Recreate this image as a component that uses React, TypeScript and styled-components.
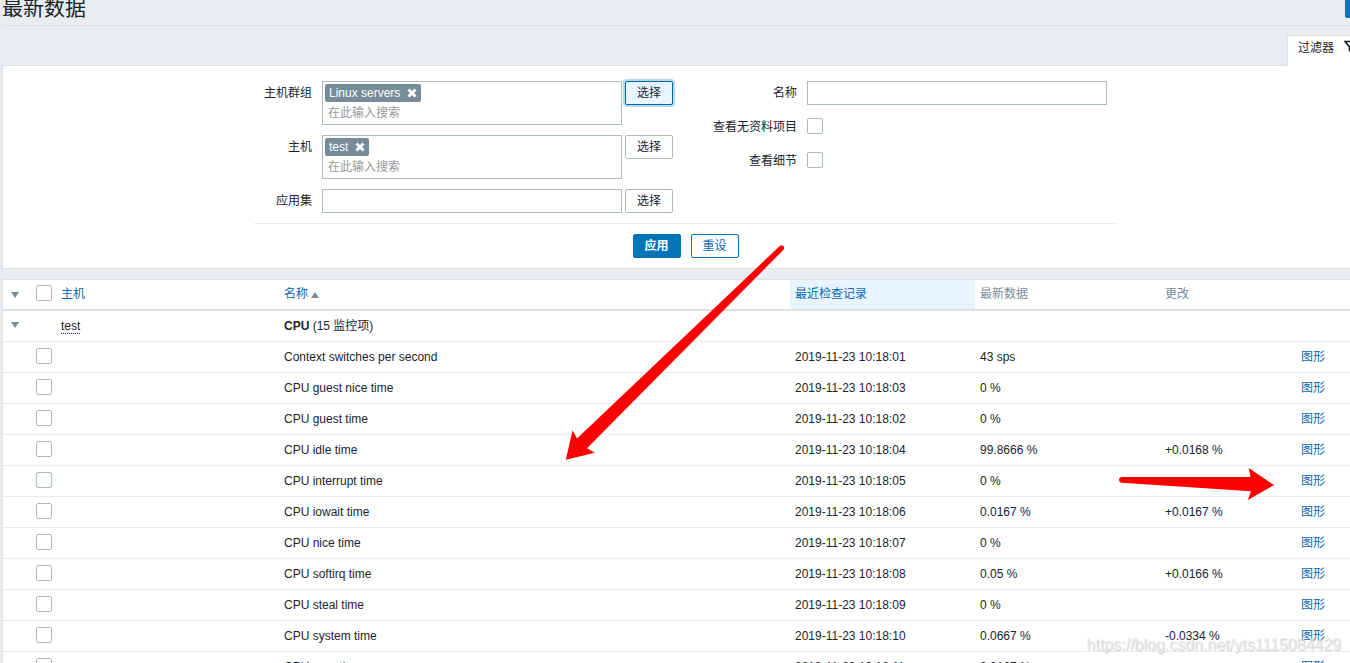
import React from "react";
import styled, { createGlobalStyle, css } from "styled-components";

const color = {
  page: "#e9edf0",
  line: "#dce2e5",
  rowLine: "#e9ebed",
  text: "#1a252c",
  muted: "#768d99",
  control: "#acbbc2",
  link: "#0275b8",
  linkText: "#0a69b0",
  hover: "#e8f5ff",
  arrow: "#fe0000",
};

const GlobalStyle = createGlobalStyle`
  * { box-sizing: border-box; }
  html, body { margin: 0; height: 100%; overflow: hidden; }
  body, button, input {
    font-family: "Liberation Sans", Arial, "Noto Sans CJK SC", sans-serif;
    font-size: 12px;
    line-height: 16px;
    color: ${color.text};
  }
  body { background: ${color.page}; }
`;

const Viewport = styled.div`
  position: relative;
  height: 100vh;
  overflow: hidden;
`;

const Page = styled.main`
  margin-left: 2px;
  margin-right: -19px;
`;

const Header = styled.header`
  display: flex;
  justify-content: space-between;
  height: 26px;
  padding-bottom: 7px;
  border-bottom: 1px solid ${color.line};
`;

const Title = styled.h1`
  margin: 0;
  font-size: 21px;
  line-height: 16px;
  font-weight: 400;
`;

const KioskButton = styled.button`
  align-self: flex-end;
  flex: none;
  width: 24px;
  height: 24px;
  padding: 0;
  border: 0;
  border-radius: 2px;
  background: ${color.link};
`;

const TabBar = styled.div`
  display: flex;
  justify-content: flex-end;
  padding-top: 9px;
`;

const Tab = styled.button`
  position: relative;
  display: flex;
  align-items: flex-start;
  gap: 10px;
  height: 31px;
  margin-bottom: -1px;
  padding: 4px 10px;
  border: 1px solid ${color.line};
  border-bottom: 0;
  background: #fff;
`;

const FilterPanel = styled.form`
  display: flex;
  flex-direction: column;
  align-items: center;
  padding: 15px 0 10px;
  margin-bottom: 10px;
  border: 1px solid ${color.line};
  background: #fff;
`;

const FilterColumns = styled.div`
  display: flex;
  gap: 40px;
  padding: 0 10px 10px;
  border-bottom: 1px solid ${color.rowLine};
`;

const Fields = styled.div`
  display: grid;
  grid-template-columns: max-content auto;
  align-content: start;
  gap: 10px;
`;

const Label = styled.label`
  line-height: 24px;
  text-align: right;
`;

const Control = styled.div`
  display: flex;
  align-items: flex-start;
  gap: 3px;
  min-height: 24px;
`;

const TextInput = styled.input`
  width: 300px;
  height: 24px;
  padding: 0 5px;
  border: 1px solid ${color.control};
  outline: 0;
`;

const MultiSelect = styled.div`
  display: flex;
  flex-direction: column;
  align-items: flex-start;
  gap: 2px;
  width: 300px;
  padding: 2px;
  border: 1px solid ${color.control};
  background: #fff;

  input {
    width: 100%;
    height: 18px;
    padding: 0 3px;
    border: 0;
    outline: 0;
  }
  input::placeholder { color: #999; opacity: 1; }
`;

const Tag = styled.span`
  display: flex;
  align-items: center;
  gap: 7px;
  height: 18px;
  padding: 0 4px;
  border-radius: 2px;
  background: ${color.muted};
  color: #fff;

  button {
    display: flex;
    padding: 0;
    border: 0;
    background: none;
  }
`;

const Button = styled.button<{ $kind?: "focused" | "primary" | "outline" }>`
  width: 48px;
  height: 24px;
  padding: 0;
  border: 1px solid ${color.control};
  border-radius: 2px;
  background: #fff;
  ${(p) =>
    p.$kind === "focused" &&
    css`
      border-color: #0268a5;
      background: ${color.hover};
      box-shadow: 0 0 0 2px #b3d9f7;
    `}
  ${(p) =>
    p.$kind === "primary" &&
    css`
      border-color: ${color.link};
      background: ${color.link};
      color: #fff;
      font-weight: 700;
    `}
  ${(p) =>
    p.$kind === "outline" &&
    css`
      border-color: ${color.link};
      color: ${color.linkText};
    `}
`;

const Actions = styled.div`
  display: flex;
  gap: 10px;
  padding-top: 10px;
`;

const Checkbox = styled.input.attrs({ type: "checkbox" })`
  appearance: none;
  display: block;
  width: 16px;
  height: 16px;
  margin: 0;
  border: 1px solid ${color.control};
  border-radius: 2px;
  background: #fff;

  ${Control} & { margin-top: 3px; }
`;

const Table = styled.table`
  width: 100%;
  table-layout: fixed;
  border-collapse: separate;
  border-spacing: 0;
  border: 1px solid ${color.line};
  background: #fff;
`;

const Col = styled.col<{ $w?: number }>`
  ${(p) => p.$w && `width: ${p.$w}px;`}
`;

const Th = styled.th<{ $active?: boolean }>`
  height: 31px;
  padding: 5px 5px 6px;
  border-bottom: 2px solid ${color.line};
  background: ${(p) => (p.$active ? color.hover : "#fff")};
  color: ${color.muted};
  font-weight: 400;
  text-align: left;
  vertical-align: top;
  line-height: 18px;
  white-space: nowrap;
`;

const Td = styled.td`
  height: 31px;
  padding: 6px 5px;
  border-bottom: 1px solid ${color.rowLine};
  vertical-align: top;
  line-height: 18px;
  white-space: nowrap;
`;

const Link = styled.a`
  color: ${color.linkText};
  text-decoration: none;
`;

const HostLink = styled.a`
  display: inline-block;
  line-height: 14px;
  color: ${color.text};
  text-decoration: none;
  border-bottom: 1px dotted ${color.text};
`;

const Toggle = styled.button<{ $head?: boolean }>`
  display: block;
  margin: 0 0 0 3px;
  padding: ${(p) => (p.$head ? "7px 0 0" : "5px 0 0")};
  border: 0;
  background: none;

  svg { display: block; }
`;

const ArrowLayer = styled.svg`
  position: absolute;
  left: 0;
  top: 0;
  pointer-events: none;
`;

const Watermark = styled.div`
  position: absolute;
  right: 9px;
  bottom: 8px;
  font-size: 16px;
  line-height: 20px;
  color: rgba(236, 236, 236, 0.75);
  text-shadow: 1px 1px 1px rgba(150, 150, 150, 0.45);
  pointer-events: none;
`;

const Triangle = ({ up }: { up?: boolean }) => (
  <svg width="8" height="6" viewBox="0 0 8 6" aria-hidden="true">
    <path d={up ? "M0 6L4 0L8 6Z" : "M0 0H8L4 6Z"} fill={color.muted} />
  </svg>
);

const Funnel = () => (
  <svg width="14" height="14" viewBox="0 0 14 14" aria-hidden="true">
    <path d="M1 1.5H13L8.5 7V12.5L5.5 10.5V7Z" fill="none" stroke={color.text} strokeWidth="1.6" />
  </svg>
);

const Cross = () => (
  <svg width="10" height="10" viewBox="0 0 10 10" aria-hidden="true">
    <path d="M1.5 1.5L8.5 8.5M8.5 1.5L1.5 8.5" stroke="#fff" strokeWidth="2.8" />
  </svg>
);

type Picker = { id: string; label: string; tag?: string; focused?: boolean };

const pickers: Picker[] = [
  { id: "groups", label: "主机群组", tag: "Linux servers", focused: true },
  { id: "hosts", label: "主机", tag: "test" },
  { id: "application", label: "应用集" },
];

const items: [string, string, string, string][] = [
  ["Context switches per second", "01", "43 sps", ""],
  ["CPU guest nice time", "03", "0 %", ""],
  ["CPU guest time", "02", "0 %", ""],
  ["CPU idle time", "04", "99.8666 %", "+0.0168 %"],
  ["CPU interrupt time", "05", "0 %", ""],
  ["CPU iowait time", "06", "0.0167 %", "+0.0167 %"],
  ["CPU nice time", "07", "0 %", ""],
  ["CPU softirq time", "08", "0.05 %", "+0.0166 %"],
  ["CPU steal time", "09", "0 %", ""],
  ["CPU system time", "10", "0.0667 %", "-0.0334 %"],
  ["CPU user time", "11", "0.0167 %", ""],
];

const PickerField = ({ id, label, tag, focused }: Picker) => (
  <>
    <Label htmlFor={id}>{label}</Label>
    <Control>
      {tag ? (
        <MultiSelect>
          <Tag>
            {tag}
            <button type="button" aria-label={`移除 ${tag}`}>
              <Cross />
            </button>
          </Tag>
          <input id={id} placeholder="在此输入搜索" />
        </MultiSelect>
      ) : (
        <TextInput id={id} />
      )}
      <Button type="button" $kind={focused ? "focused" : undefined}>
        选择
      </Button>
    </Control>
  </>
);

const Filter = () => (
  <FilterPanel onSubmit={(e) => e.preventDefault()}>
    <FilterColumns>
      <Fields>
        {pickers.map((p) => (
          <PickerField key={p.id} {...p} />
        ))}
      </Fields>
      <Fields>
        <Label htmlFor="name">名称</Label>
        <Control>
          <TextInput id="name" />
        </Control>
        <Label htmlFor="without-data">查看无资料项目</Label>
        <Control>
          <Checkbox id="without-data" />
        </Control>
        <Label htmlFor="details">查看细节</Label>
        <Control>
          <Checkbox id="details" />
        </Control>
      </Fields>
    </FilterColumns>
    <Actions>
      <Button type="submit" $kind="primary">
        应用
      </Button>
      <Button type="reset" $kind="outline">
        重设
      </Button>
    </Actions>
  </FilterPanel>
);

const LatestData = () => (
  <Table>
    <colgroup>
      <Col $w={28} />
      <Col $w={25} />
      <Col $w={223} />
      <Col />
      <Col $w={185} />
      <Col $w={185} />
      <Col $w={136} />
      <Col $w={72} />
    </colgroup>
    <thead>
      <tr>
        <Th>
          <Toggle $head type="button" aria-label="全部折叠">
            <Triangle />
          </Toggle>
        </Th>
        <Th>
          <Checkbox aria-label="全选" />
        </Th>
        <Th>
          <Link href="#host">主机</Link>
        </Th>
        <Th>
          <Link href="#name">
            名称 <Triangle up />
          </Link>
        </Th>
        <Th $active>
          <Link href="#lastclock">最近检查记录</Link>
        </Th>
        <Th>最新数据</Th>
        <Th>更改</Th>
        <Th />
      </tr>
    </thead>
    <tbody>
      <tr>
        <Td>
          <Toggle type="button" aria-label="折叠 test">
            <Triangle />
          </Toggle>
        </Td>
        <Td />
        <Td>
          <HostLink href="#test">test</HostLink>
        </Td>
        <Td colSpan={5}>
          <b>CPU</b> (15 监控项)
        </Td>
      </tr>
      {items.map(([name, second, value, change]) => (
        <tr key={name}>
          <Td />
          <Td>
            <Checkbox aria-label={name} />
          </Td>
          <Td />
          <Td>{name}</Td>
          <Td>2019-11-23 10:18:{second}</Td>
          <Td>{value}</Td>
          <Td>{change}</Td>
          <Td>
            <Link href="#graph">图形</Link>
          </Td>
        </tr>
      ))}
    </tbody>
  </Table>
);

export default function App() {
  return (
    <>
      <GlobalStyle />
      <Viewport>
        <Page>
          <Header>
            <Title>最新数据</Title>
            <KioskButton type="button" aria-label="全屏" />
          </Header>
          <TabBar>
            <Tab type="button">
              过滤器
              <Funnel />
            </Tab>
          </TabBar>
          <Filter />
          <LatestData />
        </Page>
        <ArrowLayer width="1350" height="663" viewBox="0 0 1350 663" aria-hidden="true">
          <path
            d="M779.5 246.2Q781.5 244.4 783.4 246.1Q785 248.2 783 250.2L587 448.3L594.8 452.8L565.8 459.8L572.6 430.2L577 438.5Z"
            fill={color.arrow}
          />
          <path
            d="M1121.5 477L1250.5 477L1248.8 468L1274 485L1247.8 500L1251 491.2L1121.5 482.8Q1119 482.3 1119 479.8Q1119 477.3 1121.5 477Z"
            fill={color.arrow}
          />
        </ArrowLayer>
        <Watermark>https://blog.csdn.net/yts1115084429</Watermark>
      </Viewport>
    </>
  );
}
